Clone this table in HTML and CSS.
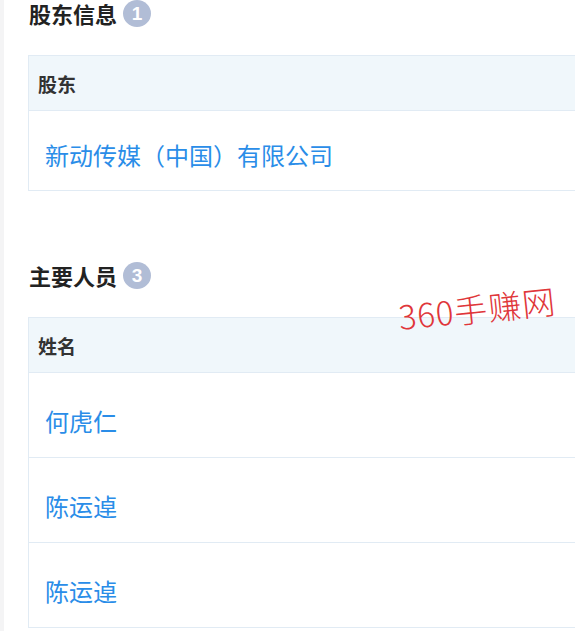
FILE: index.html
```html
<!DOCTYPE html>
<html lang="zh-CN">
<head>
  <meta charset="UTF-8" />
  <meta name="viewport" content="width=device-width, initial-scale=1.0"/>
  <title>企业信息</title>
  <link rel="stylesheet" href="styles.css">
</head>
<body>

  <div class="page">

    <div class="section section-holders">
      <h2 class="section-title">股东信息 <span class="count">1</span></h2>
      <table class="info-table">
        <tr><th>股东</th></tr>
        <tr class="row-short"><td><a href="#">新动传媒（中国）有限公司</a></td></tr>
      </table>
    </div>

    <div class="section section-people">
      <h2 class="section-title">主要人员 <span class="count">3</span></h2>
      <table class="info-table">
        <tr><th>姓名</th></tr>
        <tr><td><a href="#">何虎仁</a></td></tr>
        <tr><td><a href="#">陈运逴</a></td></tr>
        <tr><td><a href="#">陈运逴</a></td></tr>
      </table>
    </div>

    <div class="watermark">360手赚网</div>

  </div>

</body>
</html>
```

FILE: styles.css
```css
body {
  margin: 0;
  background: #fff;
  font-family: "Noto Sans CJK SC", "Noto Sans", sans-serif;
  overflow: hidden;
}

.page {
  position: relative;
  border-left: 4px solid #f4f4f5;
  padding-left: 24px;
  min-height: 631px;
  box-sizing: border-box;
}

.section-title {
  display: flex;
  align-items: center;
  gap: 6px;
  margin: 0 0 0 1px;
  height: 30px;
  line-height: 30px;
  font-size: 22px;
  font-weight: bold;
  color: #222;
}

.count {
  flex: none;
  display: flex;
  align-items: center;
  justify-content: center;
  width: 28px;
  height: 27px;
  border-radius: 50%;
  background: #b1bdd6;
  color: #fff;
  font-size: 19px;
  line-height: 1;
  font-weight: bold;
  font-family: "Liberation Sans", Arial, sans-serif;
}

.section-holders .section-title {
  height: 24px;
  line-height: 24px;
  padding-top: 1px;
}

.info-table {
  margin-top: 30px;
  width: 620px;
  border-collapse: collapse;
  border: 1px solid #e1ebf4;
}

.info-table th {
  height: 54px;
  padding: 0 0 0 9px;
  background: #f0f7fb;
  text-align: left;
  font-size: 19px;
  font-weight: bold;
  color: #333;
  border-bottom: 1px solid #e1ebf4;
}

.info-table td {
  height: 85px;
  padding: 10px 0 0 16px;
  box-sizing: border-box;
  font-size: 24px;
  border-bottom: 1px solid #e1ebf4;
}

.info-table .row-short td {
  height: 80px;
  padding-top: 7px;
}

.info-table a {
  color: #2a8de8;
  text-decoration: none;
}

.section-people {
  margin-top: 69px;
}

.section-people .info-table {
  margin-top: 27px;
}

.watermark {
  position: absolute;
  left: 397px;
  top: 292px;
  font-size: 33px;
  color: #e0363a;
  letter-spacing: 1px;
  transform: rotate(-6deg);
  transform-origin: left bottom;
  font-weight: 300;
}
```
